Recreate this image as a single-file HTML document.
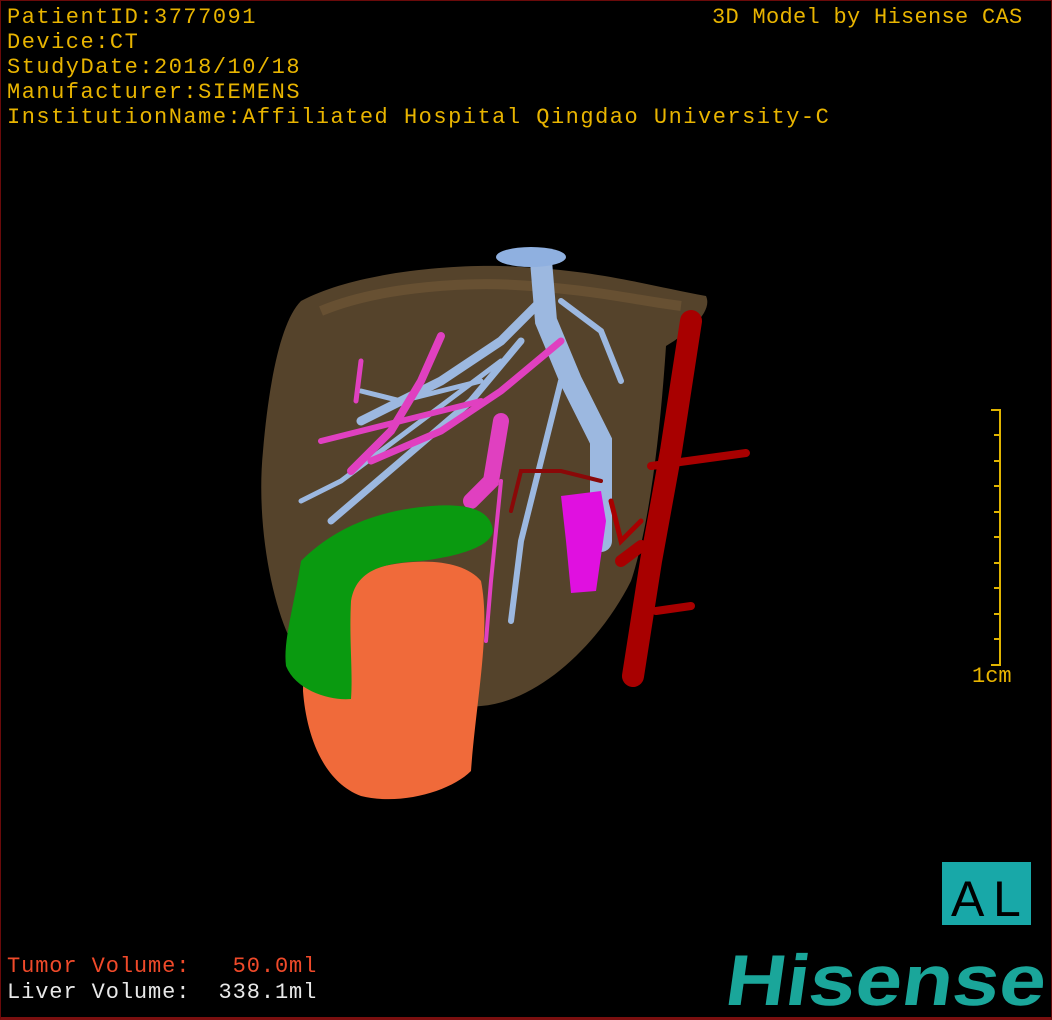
<!DOCTYPE html>
<html><head><meta charset="utf-8"><style>
html,body{margin:0;padding:0;background:#000;}
.wrap{position:relative;width:1052px;height:1020px;background:#000;overflow:hidden;box-sizing:border-box;border:1px solid #6a0a0a;border-bottom:3px solid #7a0f0f;}
.t{position:absolute;font-family:"Liberation Mono",monospace;font-size:22px;color:#e8b400;white-space:pre;line-height:25px;letter-spacing:1.5px;}
</style></head><body><div class="wrap">
<svg width="1052" height="1020" style="position:absolute;left:0;top:0">
<path d="M300,300 C360,268 470,262 520,266 C600,270 650,285 705,295 C712,310 690,330 665,345 C660,420 650,520 630,580 C600,640 540,700 480,705 C420,710 330,690 290,640 C270,600 255,520 262,450 C268,380 280,320 300,300 Z" fill="#5e4a30" opacity="0.9"/>
<path d="M320,310 C380,285 470,280 530,285 C600,290 640,300 680,305" stroke="#7a5e3a" stroke-width="10" fill="none" opacity="0.5"/>
<g stroke="#9cb8e0" stroke-linecap="round" fill="none">
<path d="M540,260 L545,320 L570,380 L600,440 L600,540" stroke-width="22"/>
<path d="M540,300 L500,340 L440,380 L360,420" stroke-width="9"/>
<path d="M520,340 L470,400 L400,460 L330,520" stroke-width="7"/>
<path d="M500,360 L420,420 L340,480 L300,500" stroke-width="5"/>
<path d="M560,380 L540,460 L520,540 L510,620" stroke-width="6"/>
<path d="M480,380 L400,400 L360,390" stroke-width="5"/>
<path d="M560,300 L600,330 L620,380" stroke-width="6"/>
</g>
<ellipse cx="530" cy="256" rx="35" ry="10" fill="#8fb0e0"/>
<g stroke="#e040c0" stroke-linecap="round" fill="none">
<path d="M440,335 L420,380 L390,430 L350,470" stroke-width="8"/>
<path d="M560,340 L500,390 L440,430 L370,460" stroke-width="7"/>
<path d="M480,400 L400,420 L320,440" stroke-width="6"/>
<path d="M500,420 L490,480 L470,500" stroke-width="16"/>
<path d="M360,360 L355,400" stroke-width="5"/>
<path d="M500,480 L490,580 L485,640" stroke-width="4"/>
</g>
<path d="M560,495 L600,490 L605,520 L595,590 L570,592 L565,540 Z" fill="#e010e0"/>
<g stroke="#a80000" stroke-linecap="round" fill="none">
<path d="M690,320 L670,450 L650,560 L632,675" stroke-width="22"/>
<path d="M650,465 L745,452" stroke-width="8"/>
<path d="M620,560 L640,545" stroke-width="12"/>
<path d="M655,610 L690,605" stroke-width="8"/>
<path d="M600,480 L560,470 L520,470 L510,510" stroke-width="4" stroke="#8a0808"/>
<path d="M610,500 L620,540 L640,520" stroke-width="5"/>
</g>
<path d="M350,575 C400,555 460,555 480,580 C490,630 475,700 470,770 C450,790 400,805 360,795 C320,780 305,730 302,690 C302,640 320,590 350,575 Z" fill="#f06a3a"/>
<path d="M300,560 C330,530 370,510 430,505 C470,502 490,510 492,530 C490,545 460,555 420,560 C380,562 355,570 350,600 C348,640 352,670 350,698 C330,700 295,690 285,665 C282,640 292,610 300,560 Z" fill="#0a9a10"/>
<g stroke="#e0b400" stroke-width="2" fill="none">
<path d="M999,408 L999,665"/>
<path d="M990,409 L1000,409 M990,664 L1000,664"/>
<path d="M993,434 L1000,434 M993,460 L1000,460 M993,485 L1000,485 M993,511 L1000,511 M993,536 L1000,536 M993,562 L1000,562 M993,587 L1000,587 M993,613 L1000,613 M993,638 L1000,638"/>
</g>
<rect x="941" y="861" width="89" height="63" fill="#18a8a8"/>
<text x="950" y="915" font-family="Liberation Sans Narrow,Liberation Sans,sans-serif" font-size="50" fill="#000">A</text>
<text x="992" y="915" font-family="Liberation Sans Narrow,Liberation Sans,sans-serif" font-size="50" fill="#000">L</text>
<g transform="translate(722,1004) skewX(-8)">
<text x="0" y="0" font-family="Liberation Sans,sans-serif" font-weight="bold" font-size="72" fill="#1aa69a" textLength="320" lengthAdjust="spacingAndGlyphs">Hisense</text>
</g>
</svg>
<div class="t" style="left:6px;top:4px">PatientID:3777091
Device:CT
StudyDate:2018/10/18
Manufacturer:SIEMENS
InstitutionName:Affiliated Hospital Qingdao University-C</div>
<div class="t" style="left:711px;top:4px;letter-spacing:0.3px">3D Model by Hisense CAS</div>
<div class="t" style="left:971px;top:663px;letter-spacing:0">1cm</div>
<div class="t" style="left:6px;top:953px;color:#f04a2a;letter-spacing:0.9px">Tumor Volume:   50.0ml</div>
<div class="t" style="left:6px;top:979px;color:#e8e8e8;letter-spacing:0.9px">Liver Volume:  338.1ml</div>
</div></body></html>
